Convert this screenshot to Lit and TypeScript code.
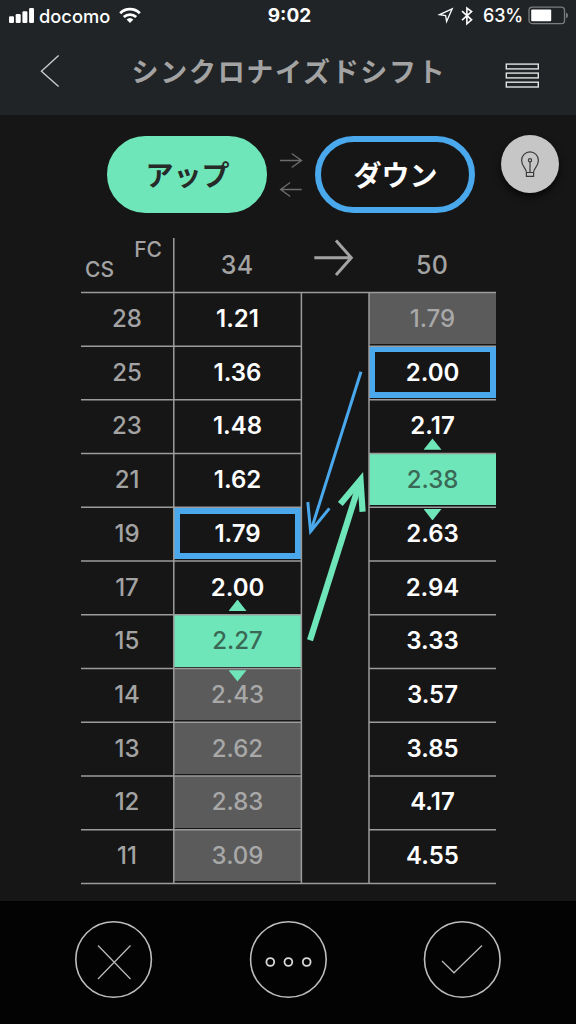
import { LitElement, html, css, svg } from "lit";
import { customElement } from "lit/decorators.js";
import { classMap } from "lit/directives/class-map.js";

type Mark = "" | "off" | "up" | "down";
interface Row { cs: number; low: string; lowMark: Mark; high: string; highMark: Mark; }

const ROWS: Row[] = [
  { cs: 28, low: "1.21", lowMark: "", high: "1.79", highMark: "off" },
  { cs: 25, low: "1.36", lowMark: "", high: "2.00", highMark: "down" },
  { cs: 23, low: "1.48", lowMark: "", high: "2.17", highMark: "" },
  { cs: 21, low: "1.62", lowMark: "", high: "2.38", highMark: "up" },
  { cs: 19, low: "1.79", lowMark: "down", high: "2.63", highMark: "" },
  { cs: 17, low: "2.00", lowMark: "", high: "2.94", highMark: "" },
  { cs: 15, low: "2.27", lowMark: "up", high: "3.33", highMark: "" },
  { cs: 14, low: "2.43", lowMark: "off", high: "3.57", highMark: "" },
  { cs: 13, low: "2.62", lowMark: "off", high: "3.85", highMark: "" },
  { cs: 12, low: "2.83", lowMark: "off", high: "4.17", highMark: "" },
  { cs: 11, low: "3.09", lowMark: "off", high: "4.55", highMark: "" },
];

@customElement("status-bar")
class StatusBar extends LitElement {
  static styles = css`
    :host { display: grid; grid-template-columns: 1fr auto 1fr; align-items: center; height: 32px;
      padding: 0 8px 0 9px; color: #fff; font: 500 18.3px/32px Inter, sans-serif; }
    .side { display: flex; align-items: center; }
    .end { justify-content: flex-end; }
    .carrier { margin: 0 9px 0 5px; }
    .time { font-size: 19px; font-weight: 700; padding-left: 2px; }
    .pct { margin: 0 5px 0 10px; font-size: 18px; letter-spacing: -0.2px; }
    svg { display: block; }
  `;
  render() {
    return html`
      <div class="side">
        <svg width="25" height="32" viewBox="0 0 25 32" fill="#fff">
          <rect x="0" y="16.2" width="5" height="6.8" rx="1.2"/>
          <rect x="6.7" y="14" width="5" height="9" rx="1.2"/>
          <rect x="13.4" y="11.2" width="5" height="11.8" rx="1.2"/>
          <rect x="20.1" y="8" width="4.9" height="15" rx="1.2"/>
        </svg>
        <span class="carrier">docomo</span>
        <svg width="22" height="32" viewBox="0 0 22 32" fill="none" stroke="#fff" stroke-width="2.8">
          <path d="M1.2 13.2a14 14 0 0 1 19.6 0"/>
          <path d="M4.8 17.1a9 9 0 0 1 12.4 0"/>
          <path d="M11 23l-3.4-3.5a5 5 0 0 1 6.8 0z" fill="#fff" stroke="none"/>
        </svg>
      </div>
      <span class="time">9:02</span>
      <div class="side end">
        <svg width="36" height="32" viewBox="0 0 36 32" fill="none" stroke="#fff">
          <path d="M2.6 14.6L15.2 8.8 9.6 21.6 8.6 15.5z" stroke-width="1.3"/>
          <path d="M25 11.2l9.6 8.6-4.7 4V8l4.7 3.6-9.6 8.6" stroke-width="1.6"/>
        </svg>
        <span class="pct">63%</span>
        <svg width="40" height="32" viewBox="0 0 40 32">
          <rect x="1" y="7.2" width="35.5" height="16.4" rx="3.2" fill="none" stroke="#7b7d7e" stroke-width="1.3"/>
          <rect x="3.2" y="9.6" width="20" height="11.6" rx="1" fill="#fff"/>
          <path d="M38 12.6q2 .8 2 3t-2 3z" fill="#7b7d7e"/>
        </svg>
      </div>`;
  }
}

@customElement("ratio-cell")
class RatioCell extends LitElement {
  static properties = { value: {}, mark: {} };
  declare value: string;
  declare mark: Mark;
  static styles = css`
    :host { display: block; position: relative; min-width: 0; }
    .fill { box-sizing: border-box; height: 51.6px; display: flex; align-items: center; justify-content: center;
      color: #fff; font: 600 24px/1 Inter, sans-serif; padding-top: 1px; }
    .off { background: #5b5b5b; color: #a8a8a8; font-weight: 550; }
    .up { background: #6ee6b9; color: #3a6855; font-weight: 550; }
    .down { border: 6px solid #4aa8ed; }
    .tip { position: absolute; z-index: 1; left: calc(50% - 9px); width: 18px; height: 11.4px; background: #6ee6b9; }
    .above { top: -15.4px; clip-path: polygon(50% 0, 100% 100%, 0 100%); }
    .below { top: 55.2px; clip-path: polygon(0 0, 100% 0, 50% 100%); }
  `;
  render() {
    const cls = { fill: true, off: this.mark === "off", up: this.mark === "up", down: this.mark === "down" };
    return html`<div class=${classMap(cls)}>${this.value}</div>
      ${this.mark === "up" ? html`<i class="tip above"></i><i class="tip below"></i>` : ""}`;
  }
}

@customElement("shift-table")
class ShiftTable extends LitElement {
  static styles = css`
    :host { display: block; position: relative; width: 415px; color: #a3a3a3; font: 550 24px/1 Inter, sans-serif; }
    .head, .row { display: grid; grid-template-columns: 93px 127px 68px 127px; }
    .head { height: 54.7px; }
    .row { height: 53.73px; }
    .corner { display: flex; flex-direction: column; font-size: 21px; padding: 1px 12px 0 4px; }
    .fc { align-self: flex-end; }
    .corner span { height: 20px; line-height: 21px; }
    .teeth { text-align: center; padding: 15px 1px 0 0; font-size: 25px; letter-spacing: 0.3px; }
    .cs { display: flex; height: 51.6px; align-items: center; justify-content: center; padding: 1px 1px 0 0;
      box-sizing: border-box; }
    .lines { position: absolute; left: 0; top: 0; pointer-events: none; z-index: 1; }
    .arrow { display: block; }
    .hi { grid-column: 4; }
  `;
  render() {
    const y = (i: number) => 54.4 + i * 53.73;
    return html`
      <div class="head">
        <div class="corner"><span class="fc">FC</span><span>CS</span></div>
        <div class="teeth">34</div>
        <svg class="arrow" width="68" height="54" viewBox="0 0 68 54" fill="none" stroke="#a3a3a3" stroke-width="3">
          <path d="M13.3 19.8H50M35 2.5L50.3 19.8 35 37"/>
        </svg>
        <div class="teeth">50</div>
      </div>
      ${ROWS.map((r) => html`<div class="row">
        <div class="cs">${r.cs}</div>
        <ratio-cell .value=${r.low} .mark=${r.lowMark}></ratio-cell>
        <ratio-cell class="hi" .value=${r.high} .mark=${r.highMark}></ratio-cell>
      </div>`)}
      <svg class="lines" width="415" height="648" viewBox="0 0 415 648" fill="none">
        <g stroke="#9c9c9c" stroke-width="1.5">
          <path d="M0 ${y(0)}H415M0 ${y(11)}H415M92.8 0V${y(11)}M220.4 ${y(0)}V${y(11)}M288 ${y(0)}V${y(11)}"/>
          ${ROWS.slice(1).map((_, i) => svg`<path d="M0 ${y(i + 1)}H220M288 ${y(i + 1)}H415"/>`)}
        </g>
        <g stroke="#4aa8ed" stroke-width="3">
          <path d="M280 133.7L229.8 293"/>
          <path d="M226.8 264L229.6 293.5 248.4 270.4"/>
        </g>
        <g stroke="#6ee6b9" stroke-width="6.2">
          <path d="M229 402.3L279 244"/>
          <path d="M259.3 266L279.5 242 281.6 273.7"/>
        </g>
      </svg>`;
  }
}

@customElement("app-root")
class AppRoot extends LitElement {
  static styles = css`
    :host { display: flex; flex-direction: column; width: 576px; height: 1024px; overflow: hidden; background: #161616; }
    .top { height: 115px; background: #212426; flex: none; }
    .nav { display: grid; grid-template-columns: 72px 1fr 73px; height: 83px; }
    .title { text-align: center; color: #a3a3a3; font: 700 27px/78px "Noto Sans CJK JP", sans-serif;
      letter-spacing: 1.7px; white-space: nowrap; padding-left: 3px; }
    .modes { display: flex; padding: 21px 0 0 107.4px; flex: none; height: 102px; box-sizing: border-box; }
    .pill { box-sizing: border-box; width: 160px; height: 77px; border-radius: 39px; border: 6px solid #6ee6b9;
      background: #6ee6b9; color: #262b29; text-align: center; font: 700 28px/64px "Noto Sans CJK JP", sans-serif; }
    .down { border-color: #4aa8ed; background: #161616; color: #fff; }
    .swap { width: 48px; height: 77px; }
    .bulb { width: 58px; height: 58px; border-radius: 50%; background: #c6c6c6; margin: -1px 0 0 25.6px;
      box-shadow: 0 4px 7px rgba(0, 0, 0, 0.7); }
    shift-table { margin: 21px 0 0 81px; flex: none; }
    .foot { margin-top: auto; height: 123px; flex: none; background: #030303; display: flex;
      justify-content: space-between; padding: 19px 74px 0; box-sizing: border-box; }
    svg { display: block; }
  `;
  render() {
    return html`
      <div class="top">
        <status-bar></status-bar>
        <div class="nav">
          <svg width="72" height="83" fill="none" stroke="#d0d0d0" stroke-width="1.3"><path d="M58.6 23.5L41.4 39.3 58.6 54.5"/></svg>
          <div class="title">シンクロナイズドシフト</div>
          <svg width="73" height="83" fill="none" stroke="#e2e2e2" stroke-width="1.4">
            <rect x="3.3" y="32.1" width="32" height="4.8"/><rect x="3.3" y="41.1" width="32" height="4.8"/><rect x="3.3" y="50.2" width="32" height="4.8"/>
          </svg>
        </div>
      </div>
      <div class="modes">
        <div class="pill">アップ</div>
        <svg class="swap" viewBox="0 0 48 77" fill="none" stroke="#6c6c6c" stroke-width="1.4">
          <path d="M13 24.5H34.3M24.7 17.5L34.5 24.5 24.7 31.5M34.7 53.5H13.7M23.2 46.5L13.7 53.5 23.2 60.5"/>
        </svg>
        <div class="pill down">ダウン</div>
        <div class="bulb">
          <svg width="58" height="58" viewBox="0 0 58 58" fill="none" stroke="#3a3a3a" stroke-width="1.2">
            <path d="M25.4 37.5c0-4.2-4.8-6-4.8-12.2a8.4 8.4 0 0 1 16.8 0c0 6.2-4.8 8-4.8 12.2v3.8h-7.2zM25.4 37.5h7.2M29 37.5V27"/>
            <circle cx="29" cy="25.3" r="1.6"/>
          </svg>
        </div>
      </div>
      <shift-table></shift-table>
      <div class="foot">
        <svg width="79" height="79" fill="none" stroke="#bdbdbd"><circle cx="39.6" cy="39.5" r="37.8" stroke-width="1.6"/>
          <path d="M24 25.5L56.5 59M56.5 25.5L24 59" stroke-width="1.2"/></svg>
        <svg width="79" height="79" fill="none" stroke="#bdbdbd"><circle cx="39.4" cy="39.5" r="37.8" stroke-width="1.6"/>
          <g stroke="#d8d8d8" stroke-width="1.8"><circle cx="21.3" cy="42" r="3.9"/><circle cx="39.4" cy="42" r="3.9"/><circle cx="57.7" cy="42" r="3.9"/></g></svg>
        <svg width="79" height="79" fill="none" stroke="#bdbdbd"><circle cx="39.3" cy="39.5" r="37.8" stroke-width="1.6"/>
          <path d="M19 41L31 52.8 59 25.5" stroke-width="1.2"/></svg>
      </div>`;
  }
}
